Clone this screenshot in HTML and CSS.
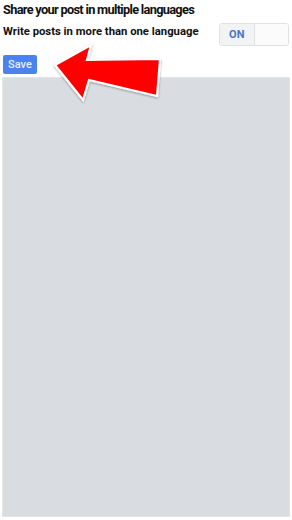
FILE: index.html
```html
<!DOCTYPE html>
<html>
<head>
<meta charset="utf-8">
<link rel="stylesheet" href="styles.css">
</head>
<body>
<div class="page">
  <h1 class="title">Share your post in multiple languages</h1>
  <div class="row">
    <div class="label">Write posts in more than one language</div>
    <div class="toggle">
      <span class="on">ON</span>
      <span class="off"></span>
    </div>
  </div>
  <div class="actions">
    <button class="save">Save</button>
  </div>
  <div class="panel"></div>
</div>
<svg class="arrow" width="292" height="120" viewBox="0 0 292 120">
  <defs>
    <filter id="sh" x="-20%" y="-20%" width="140%" height="140%">
      <feDropShadow dx="0" dy="1" stdDeviation="1.2" flood-color="#000" flood-opacity="0.35"/>
    </filter>
  </defs>
  <polygon points="55,65 91,45 87,60 160,59 157,96 89,80 83,100" fill="#ff0000" stroke="#ffffff" stroke-width="2.2" stroke-linejoin="miter" filter="url(#sh)"/>
</svg>
</body>
</html>
```
FILE: styles.css
```css
html, body {
  margin: 0;
  padding: 0;
  background: #ffffff;
}
body {
  width: 292px;
  height: 520px;
  position: relative;
  overflow: hidden;
  font-family: Roboto, "Liberation Sans", Arial, sans-serif;
}
.page {
  display: flex;
  flex-direction: column;
  height: 520px;
  box-sizing: border-box;
  padding: 0 2px 3px 2px;
}
.title {
  margin: 0;
  padding: 2px 0 0 1px;
  font-size: 12.8px;
  font-weight: 700;
  letter-spacing: -0.7px;
  line-height: 16px;
  color: #111111;
  white-space: nowrap;
}
.row {
  display: flex;
  justify-content: space-between;
  align-items: flex-start;
  margin-top: 5px;
}
.label {
  padding: 2px 0 0 1px;
  font-size: 11.3px;
  font-weight: 700;
  line-height: 14px;
  color: #111111;
  white-space: nowrap;
}
.toggle {
  display: flex;
  width: 68px;
  height: 21px;
  border: 1px solid #dfe1e5;
  border-radius: 3px;
  overflow: hidden;
  margin-right: 1px;
}
.on {
  flex: 1;
  display: flex;
  align-items: center;
  justify-content: center;
  background: #f2f3f5;
  color: #4a73c4;
  font-size: 11px;
  font-weight: 700;
  border-right: 1px solid #dfe1e5;
}
.off {
  flex: 1;
  background: #fbfbfc;
}
.actions {
  margin-top: 9px;
  padding-left: 1px;
}
.save {
  display: block;
  border: none;
  background: #4a83ef;
  color: #e8f0ff;
  font-family: Roboto, "Liberation Sans", Arial, sans-serif;
  font-size: 11px;
  font-weight: 500;
  width: 34px;
  height: 19px;
  padding: 0;
  border-radius: 2px;
}
.panel {
  flex: 1;
  margin-top: 3px;
  background: #d9dce0;
  border: 1px solid #e3e5e8;
}
.arrow {
  position: absolute;
  left: 0;
  top: 0;
  pointer-events: none;
}
```
